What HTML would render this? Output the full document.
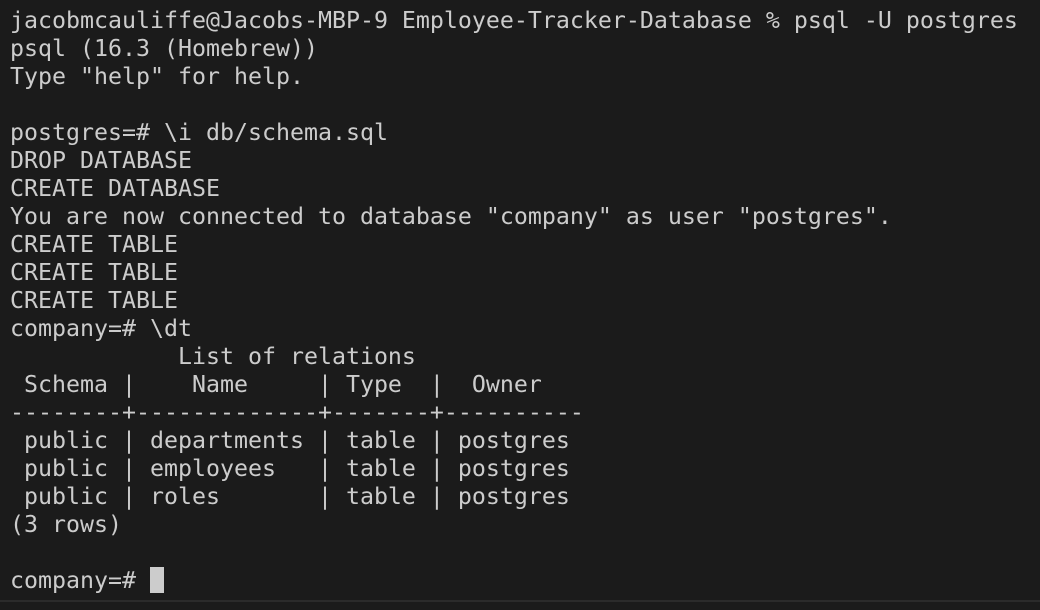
<!DOCTYPE html>
<html><head><style>
body{margin:0;width:1040px;height:610px;background:#1b1b1b;overflow:hidden;position:relative}
pre{margin:0;position:absolute;left:10px;top:7px;font-family:"DejaVu Sans Mono","Liberation Mono",monospace;font-size:23.25px;line-height:28px;color:#cccccc;white-space:pre}
.cur{display:inline-block;width:14px;height:26px;background:#cccccc;vertical-align:-5px}
.bl{position:absolute;left:0;top:600px;width:1040px;height:2px;background:#2b2b2b}
</style></head><body>
<pre>jacobmcauliffe@Jacobs-MBP-9 Employee-Tracker-Database % psql -U postgres
psql (16.3 (Homebrew))
Type "help" for help.

postgres=# \i db/schema.sql
DROP DATABASE
CREATE DATABASE
You are now connected to database "company" as user "postgres".
CREATE TABLE
CREATE TABLE
CREATE TABLE
company=# \dt
            List of relations
 Schema |    Name     | Type  |  Owner
--------+-------------+-------+----------
 public | departments | table | postgres
 public | employees   | table | postgres
 public | roles       | table | postgres
(3 rows)

company=# <span class="cur"></span></pre>
<div class="bl"></div>
</body></html>
